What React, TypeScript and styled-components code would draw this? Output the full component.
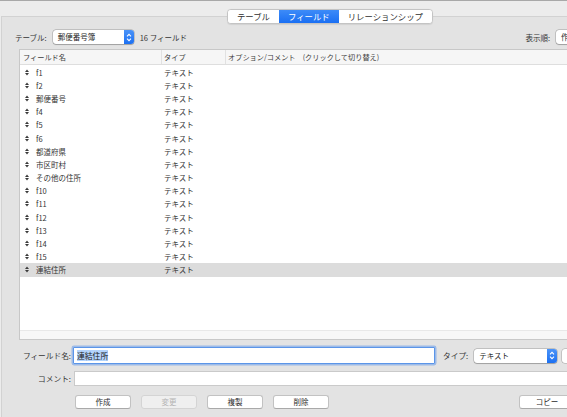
import styled, { createGlobalStyle } from 'styled-components';

const GlobalStyle = createGlobalStyle`
  html, body {
    margin: 0;
    padding: 0;
    background: #ececec;
  }
  body {
    font-family: "Noto Sans CJK JP", "Noto Sans", sans-serif;
    color: #2b2b2b;
  }
`;

const fields = [
  'f1',
  'f2',
  '郵便番号',
  'f4',
  'f5',
  'f6',
  '都道府県',
  '市区町村',
  'その他の住所',
  'f10',
  'f11',
  'f12',
  'f13',
  'f14',
  'f15',
  '連結住所',
];

const tabs = ['テーブル', 'フィールド', 'リレーションシップ'];

const ArrowIcon = () => (
  <svg width="6" height="9" viewBox="0 0 6 9">
    <path d="M1 3.4 L3 1.4 L5 3.4 M1 5.6 L3 7.6 L5 5.6" fill="none" stroke="#fff" strokeWidth="1.1" />
  </svg>
);

const DragHandle = () => (
  <svg width="4" height="7" viewBox="0 0 4 7">
    <polygon points="0,3 2,0.6 4,3" fill="#3a3a3a" />
    <polygon points="0,4 2,6.4 4,4" fill="#3a3a3a" />
  </svg>
);

const PopupButton = ({ value, width }: { value: string; width: number }) => (
  <Popup $w={width}>
    <PopupText>{value}</PopupText>
    <PopupArrow>
      <ArrowIcon />
    </PopupArrow>
  </Popup>
);

const App = () => {
  return (
    <>
      <GlobalStyle />
      <Window>
        <TabStrip>
          <Segmented>
            {tabs.map((t) => (
              <Segment key={t} $active={t === 'フィールド'}>
                {t}
              </Segment>
            ))}
          </Segmented>
        </TabStrip>
        <Panel>
          <TopRow>
            <Label>テーブル:</Label>
            <PopupButton value="郵便番号簿" width={81} />
            <Count>16 フィールド</Count>
            <OrderLabel>表示順:</OrderLabel>
            <PopupButton value="作成順" width={70} />
          </TopRow>

          <Table>
            <Header>
              <HeadCell>フィールド名</HeadCell>
              <HeadCell $divider>タイプ</HeadCell>
              <HeadCell $divider>オプション/コメント　(クリックして切り替え)</HeadCell>
            </Header>
            <Body>
              {fields.map((f, i) => (
                <Row key={f} $selected={i === fields.length - 1}>
                  <NameCell>
                    <DragHandle />
                    <span>{f}</span>
                  </NameCell>
                  <TypeCell>テキスト</TypeCell>
                  <span />
                </Row>
              ))}
            </Body>
            <ScrollStrip />
          </Table>

          <FieldRow>
            <FormLabel>フィールド名:</FormLabel>
            <FocusedInput>
              <Selection>連結住所</Selection>
            </FocusedInput>
            <TypeLabel>タイプ:</TypeLabel>
            <PopupButton value="テキスト" width={83} />
            <EdgeButton />
          </FieldRow>

          <CommentRow>
            <FormLabel>コメント:</FormLabel>
            <CommentInput />
          </CommentRow>

          <ButtonBar>
            <PushButton>作成</PushButton>
            <PushButton disabled>変更</PushButton>
            <PushButton>複製</PushButton>
            <PushButton>削除</PushButton>
            <CopyButton>コピー</CopyButton>
          </ButtonBar>
        </Panel>
      </Window>
    </>
  );
};

const Window = styled.div`
  width: 567px;
  height: 417px;
  overflow: hidden;
  box-sizing: border-box;
  border-top: 1px solid #a8a8a8;
  background: #ececec;
`;

const TabStrip = styled.div`
  display: flex;
  padding: 8px 0 0 227px;
  position: relative;
  z-index: 1;
`;

const Segmented = styled.div`
  display: flex;
  height: 15px;
  box-sizing: border-box;
  border: 1px solid #c4c4c4;
  border-radius: 4px;
  background: #fff;
  overflow: hidden;
  box-shadow: 0 0.5px 1px rgba(0, 0, 0, 0.08);
`;

const Segment = styled.div<{ $active: boolean }>`
  padding: 0 9px;
  line-height: 13px;
  font-size: 8.4px;
  white-space: nowrap;
  color: ${(p) => (p.$active ? '#fff' : '#2f2f2f')};
  background: ${(p) => (p.$active ? 'linear-gradient(#3d8bf8, #1a6ff3)' : '#fff')};
`;

const Panel = styled.div`
  margin: -8px 0 0 1px;
  width: 640px;
  height: 410px;
  box-sizing: border-box;
  border: 1px solid #d2d2d2;
  background: #e3e3e3;
  padding: 13px 14px 0 13px;
`;

const TopRow = styled.div`
  display: flex;
  align-items: center;
  height: 14px;
`;

const Label = styled.span`
  font-size: 7.5px;
  color: #333;
  margin-right: 6px;
  white-space: nowrap;
`;

const Count = styled.span`
  font-size: 7.5px;
  color: #333;
  margin-left: 6px;
  white-space: nowrap;
`;

const OrderLabel = styled.span`
  font-size: 7.5px;
  color: #333;
  margin: 0 6px 0 auto;
  white-space: nowrap;
`;

const Popup = styled.div<{ $w: number }>`
  width: ${(p) => p.$w}px;
  height: 14px;
  flex-shrink: 0;
  display: flex;
  align-items: stretch;
  box-sizing: border-box;
  background: #fff;
  border-radius: 3px;
  box-shadow: 0 0 0 0.5px rgba(0, 0, 0, 0.28), 0 0.5px 1px rgba(0, 0, 0, 0.18);
  overflow: hidden;
`;

const PopupText = styled.span`
  flex: 1;
  font-size: 7.5px;
  line-height: 14px;
  padding-left: 5px;
  color: #262626;
  white-space: nowrap;
`;

const PopupArrow = styled.span`
  width: 10px;
  display: flex;
  align-items: center;
  justify-content: center;
  background: linear-gradient(#4a93f8, #1c70f2);
`;

const Table = styled.div`
  margin: 5px 0 0 4px;
  width: 610px;
  height: 291px;
  box-sizing: border-box;
  border: 1px solid #c8c8c8;
  background: #fff;
  display: flex;
  flex-direction: column;
`;

const Header = styled.div`
  display: grid;
  grid-template-columns: 141px 64px 1fr;
  height: 15px;
  box-sizing: border-box;
  background: #f6f6f6;
  border-bottom: 1px solid #dedede;
`;

const HeadCell = styled.div<{ $divider?: boolean }>`
  font-size: 7.2px;
  line-height: 14px;
  color: #3c3c3c;
  white-space: nowrap;
  padding-left: ${(p) => (p.$divider ? '2px' : '3px')};
  border-left: ${(p) => (p.$divider ? '1px solid #e1e1e1' : 'none')};
`;

const Body = styled.div`
  flex: 1;
  padding-top: 0.5px;
`;

const Row = styled.div<{ $selected: boolean }>`
  display: grid;
  grid-template-columns: 141px 64px 1fr;
  height: 13.2px;
  align-items: center;
  font-size: 7.5px;
  color: #333;
  background: ${(p) => (p.$selected ? '#dcdcdc' : 'transparent')};
`;

const NameCell = styled.div`
  display: flex;
  align-items: center;
  gap: 7px;
  padding-left: 5px;
  white-space: nowrap;
`;

const TypeCell = styled.div`
  padding-left: 3px;
  white-space: nowrap;
`;

const ScrollStrip = styled.div`
  height: 8px;
  border-top: 1px solid #e8e8e8;
  background: #f7f7f7;
`;

const FieldRow = styled.div`
  display: flex;
  align-items: center;
  margin-top: 7px;
  height: 17px;
`;

const FormLabel = styled.span`
  width: 56px;
  margin-right: 2px;
  text-align: right;
  font-size: 7.7px;
  color: #333;
  white-space: nowrap;
`;

const FocusedInput = styled.div`
  width: 362px;
  height: 17px;
  box-sizing: border-box;
  border: 1px solid #5b95e8;
  box-shadow: 0 0 0 1.5px rgba(110, 160, 235, 0.6);
  border-radius: 1px;
  background: #fff;
  display: flex;
  align-items: center;
  padding-left: 3px;
`;

const Selection = styled.span`
  font-size: 7.8px;
  line-height: 11px;
  background: #b3d4fd;
  color: #1d1d1d;
`;

const TypeLabel = styled.span`
  margin: 0 6px 0 8px;
  font-size: 7.7px;
  color: #333;
  white-space: nowrap;
`;

const EdgeButton = styled.div`
  margin-left: 5px;
  width: 20px;
  height: 14px;
  flex-shrink: 0;
  background: #fff;
  border-radius: 3px;
  box-shadow: 0 0 0 0.5px rgba(0, 0, 0, 0.28);
`;

const CommentRow = styled.div`
  display: flex;
  align-items: center;
  margin-top: 7px;
  height: 15px;
`;

const CommentInput = styled.div`
  margin-left: 1px;
  width: 540px;
  height: 15px;
  box-sizing: border-box;
  border: 1px solid #cacaca;
  background: #fff;
`;

const ButtonBar = styled.div`
  display: flex;
  gap: 10px;
  margin-top: 9px;
  padding-left: 60px;
`;

const PushButton = styled.button`
  width: 56px;
  height: 14px;
  padding: 0;
  box-sizing: border-box;
  font-family: inherit;
  font-size: 7.5px;
  line-height: 12px;
  color: #2b2b2b;
  background: #fff;
  border: 0.5px solid #c2c2c2;
  border-bottom-color: #a9a9a9;
  border-radius: 3px;

  &:disabled {
    color: #b4b4b4;
    background: #efefef;
    border-color: #d4d4d4;
  }
`;

const CopyButton = styled(PushButton)`
  margin-left: 180px;
`;

export default App;
